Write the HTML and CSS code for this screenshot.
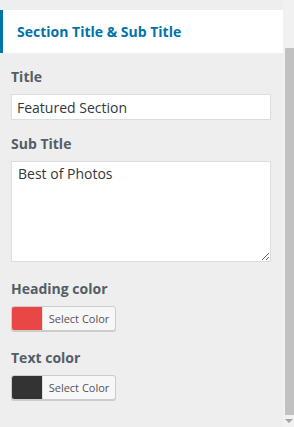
FILE: index.html
```html
<!DOCTYPE html>
<html>
<head>
<meta charset="utf-8">
<link rel="stylesheet" href="styles.css">
</head>
<body>
<div class="layout">
  <div class="panel">
    <div class="section-head">Section Title &amp; Sub Title</div>
    <div class="fields">
      <label class="field-label">Title</label>
      <input class="text-input" type="text" value="Featured Section">
      <label class="field-label">Sub Title</label>
      <textarea class="text-area">Best of Photos</textarea>
      <label class="field-label color-label">Heading color</label>
      <button class="color-btn"><span class="swatch swatch-red"></span><span class="btn-text">Select Color</span></button>
      <label class="field-label color-label">Text color</label>
      <button class="color-btn"><span class="swatch swatch-dark"></span><span class="btn-text">Select Color</span></button>
    </div>
  </div>
  <div class="scrollbar">
    <div class="thumb"></div>
    <div class="arrow"></div>
  </div>
</div>
</body>
</html>
```
FILE: styles.css
```css
html, body {
  margin: 0;
  padding: 0;
  height: 100%;
  background: #eeeeee;
  font-family: "Open Sans", "Noto Sans", sans-serif;
  color: #555d66;
}
.layout {
  display: flex;
  height: 427px;
}
.panel {
  width: 283px;
  flex: none;
}
.section-head {
  margin-top: 10px;
  height: 43px;
  box-sizing: border-box;
  background: #fff;
  border-left: 3px solid #0073aa;
  padding-left: 14px;
  line-height: 43px;
  font-size: 14px;
  font-weight: 700;
  color: #0073aa;
}
.fields {
  display: flex;
  flex-direction: column;
  align-items: flex-start;
  padding: 0 12px 0 11px;
}
.field-label {
  font-size: 14px;
  font-weight: 700;
  line-height: 20px;
  color: #555d66;
  margin-top: 14px;
  margin-bottom: 7px;
}
.text-input {
  box-sizing: border-box;
  width: 260px;
  height: 26px;
  margin: 0;
  border: 1px solid #dddddd;
  background: #fff;
  padding: 0 5px;
  font-family: inherit;
  font-size: 14px;
  color: #32373c;
  outline: none;
}
.text-area {
  box-sizing: border-box;
  width: 260px;
  height: 101px;
  margin: 0;
  border: 1px solid #dddddd;
  background: #fff;
  padding: 2px 6px;
  font-family: inherit;
  font-size: 14px;
  line-height: 20px;
  color: #32373c;
  outline: none;
}
.color-label {
  margin-top: 17px;
  margin-bottom: 7px;
}
.color-btn {
  display: flex;
  align-items: stretch;
  box-sizing: border-box;
  width: 105px;
  height: 25px;
  margin: 0;
  padding: 0;
  border: 1px solid #cccccc;
  border-radius: 3px;
  background: #f7f7f7;
  box-shadow: 0 1px 0 #cccccc;
  overflow: hidden;
  font-family: inherit;
}
.swatch {
  width: 30px;
  flex: none;
}
.swatch-red { background: #e94646; }
.swatch-dark { background: #333333; }
.btn-text {
  flex: 1;
  border-left: 1px solid #dddddd;
  font-size: 11px;
  line-height: 23px;
  color: #555555;
  text-align: center;
}
.scrollbar {
  width: 11px;
  flex: none;
  background: #f1f1f1;
  display: flex;
  flex-direction: column;
  align-items: flex-end;
}
.thumb {
  margin-top: 48px;
  width: 9px;
  height: 367px;
  background: #c1c1c1;
}
.arrow {
  margin-top: 4px;
  margin-right: 1px;
  width: 0;
  height: 0;
  border-left: 4px solid transparent;
  border-right: 4px solid transparent;
  border-top: 4px solid #a3a3a3;
}
```
